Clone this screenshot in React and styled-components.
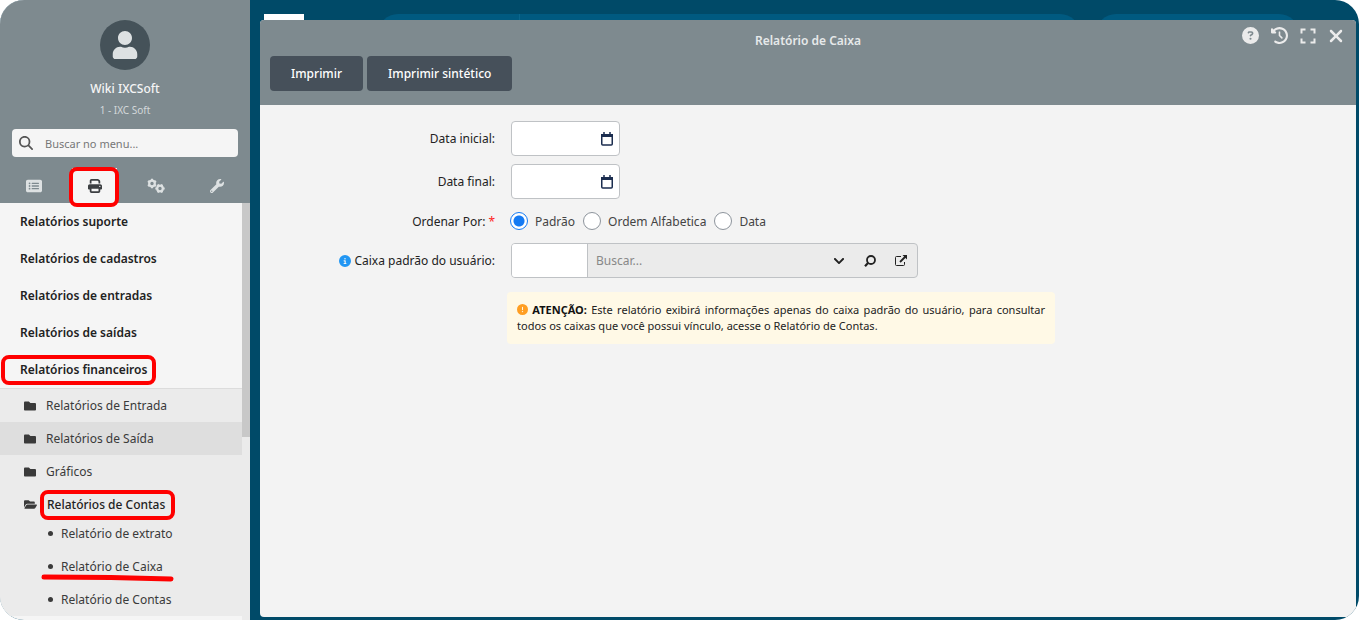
import React from 'react';
import styled, { createGlobalStyle } from 'styled-components';
import { FaUser, FaWrench, FaFolder, FaFolderOpen, FaChevronDown } from 'react-icons/fa';
import { FaCircleQuestion, FaClockRotateLeft, FaRectangleList, FaXmark, FaCircleInfo, FaCircleExclamation, FaMagnifyingGlass, FaPrint } from 'react-icons/fa6';

const groups = ['Relatórios suporte', 'Relatórios de cadastros', 'Relatórios de entradas', 'Relatórios de saídas'];
const reports = ['Relatório de extrato', 'Relatório de Caixa', 'Relatório de Contas'];
const orders = ['Padrão', 'Ordem Alfabetica', 'Data'];

const Calendar = () => (
    <svg width="14" height="14" viewBox="0 0 14 14" fill="none" stroke="#1b2d4f">
        <path d="M1.75 3h10.5v9a1 1 0 0 1-1 1h-8.5a1 1 0 0 1-1-1z" strokeWidth="1.5" />
        <path d="M1 3.5h12" strokeWidth="3" />
        <path d="M4 0v3M10 0v3" strokeWidth="1.5" />
    </svg>
);

const Gears = () => (
    <svg width="18" height="16" viewBox="0 0 18 16" fill="none" stroke="currentColor">
        <circle cx="5" cy="5.500" r="2.800" strokeWidth="2.200" />
        <path d="M5 .8v9.400M.9 3.200l8.200 4.600M.9 7.800l8.200-4.600" strokeWidth="2" strokeDasharray="1.900 5.600 1.900 0" />
        <circle cx="13" cy="10.500" r="2.800" strokeWidth="2.200" />
        <path d="M8.300 10.500h9.400M10.700 6.400l4.600 8.200M15.300 6.400l-4.600 8.200" strokeWidth="2" strokeDasharray="1.900 5.600 1.900 0" />
    </svg>
);

const Expand = () => (
    <svg width="16" height="16" viewBox="0 0 16 16" fill="none" stroke="currentColor" strokeWidth="2">
        <path d="M1.500 5.500v-4h4M10.500 1.500h4v4M14.500 10.500v4h-4M5.500 14.500h-4v-4" />
    </svg>
);

const Loupe = () => (
    <svg width="14" height="14" viewBox="0 0 14 14" fill="none" stroke="currentColor">
        <circle cx="8" cy="6" r="4" strokeWidth="1.800" />
        <path d="M5 9l-3 3.200" strokeWidth="2.200" />
    </svg>
);

const External = () => (
    <svg width="14" height="14" viewBox="0 0 14 14" fill="none" stroke="currentColor">
        <path d="M7 2.500H2.500a1 1 0 0 0-1 1v7a1 1 0 0 0 1 1h7a1 1 0 0 0 1-1V8" strokeWidth="1" />
        <path d="M6 8L11.500 2.500" strokeWidth="1.800" />
        <path d="M8.500 1h4.500v4.500z" fill="currentColor" stroke="none" />
    </svg>
);

const App = () => {
    return (
        <Shell>
            <GlobalStyle />
            <Sidebar>
                <Profile>
                    <Avatar><FaUser size={28} /></Avatar>
                    <UserName>Wiki IXCSoft</UserName>
                    <Company>1 - IXC Soft</Company>
                    <MenuSearch>
                        <FaMagnifyingGlass size={14} />
                        <input type="text" placeholder="Buscar no menu..." aria-label="Buscar no menu" />
                    </MenuSearch>
                    <Tabs>
                        <Tab type="button" aria-label="Cadastros"><FaRectangleList size={16} /></Tab>
                        <Tab type="button" aria-label="Relatórios" $active><FaPrint size={14} /><TabMark /></Tab>
                        <Tab type="button" aria-label="Configurações"><Gears /></Tab>
                        <Tab type="button" aria-label="Ferramentas"><FaWrench size={14} /></Tab>
                    </Tabs>
                </Profile>
                <MenuArea>
                    <Menu>
                        {groups.map((name) => <Group href="#" key={name}>{name}</Group>)}
                        <Group href="#">Relatórios financeiros<GroupMark /></Group>
                        <Submenu>
                            <Folder href="#"><FaFolder size={12} />Relatórios de Entrada</Folder>
                            <Folder href="#" $hover><FaFolder size={12} />Relatórios de Saída</Folder>
                            <Folder href="#"><FaFolder size={12} />Gráficos</Folder>
                            <Folder href="#" $open><FaFolderOpen size={13} />Relatórios de Contas<FolderMark /></Folder>
                            {reports.map((name) => (
                                <Report href="#" key={name}>
                                    {name}
                                    {name === 'Relatório de Caixa' && (
                                        <Underline viewBox="0 0 134 8">
                                            <path d="M3 3L70 3.500L130 5" fill="none" stroke="#f00" strokeWidth="5" strokeLinecap="round" />
                                        </Underline>
                                    )}
                                </Report>
                            ))}
                        </Submenu>
                    </Menu>
                    <ScrollTrack><ScrollThumb /></ScrollTrack>
                </MenuArea>
            </Sidebar>
            <Main>
                <TopBar>
                    <Logo />
                    <GlobalSearch><span /></GlobalSearch>
                    <TopPill />
                </TopBar>
                <Window>
                    <WindowHeader>
                        <TitleBar>
                            <Title>Relatório de Caixa</Title>
                            <WindowActions>
                                <IconButton type="button" aria-label="Ajuda"><FaCircleQuestion size={17} /></IconButton>
                                <IconButton type="button" aria-label="Histórico"><FaClockRotateLeft size={17} /></IconButton>
                                <IconButton type="button" aria-label="Expandir"><Expand /></IconButton>
                                <IconButton type="button" aria-label="Fechar"><FaXmark size={20} /></IconButton>
                            </WindowActions>
                        </TitleBar>
                        <Toolbar>
                            <Button type="button">Imprimir</Button>
                            <Button type="button">Imprimir sintético</Button>
                        </Toolbar>
                    </WindowHeader>
                    <Form>
                        <Row>
                            <Label htmlFor="start">Data inicial:</Label>
                            <DateField><input id="start" type="text" /><Calendar /></DateField>
                        </Row>
                        <Row>
                            <Label htmlFor="end">Data final:</Label>
                            <DateField><input id="end" type="text" /><Calendar /></DateField>
                        </Row>
                        <Row $short>
                            <Label as="span" id="order">Ordenar Por: <Required>*</Required></Label>
                            <Options role="radiogroup" aria-labelledby="order">
                                {orders.map((name, i) => (
                                    <Option key={name}>
                                        <Radio type="radio" name="order" defaultChecked={i === 0} />
                                        {name}
                                    </Option>
                                ))}
                            </Options>
                        </Row>
                        <Row>
                            <Label htmlFor="cashier"><FaCircleInfo size={12} color="#2196f3" />Caixa padrão do usuário:</Label>
                            <Lookup>
                                <LookupCode id="cashier" type="text" />
                                <LookupText type="text" placeholder="Buscar..." aria-label="Buscar caixa" />
                                <LookupButton type="button" aria-label="Abrir lista"><FaChevronDown size={12} /></LookupButton>
                                <LookupButton type="button" aria-label="Pesquisar"><Loupe /></LookupButton>
                                <LookupButton type="button" aria-label="Abrir cadastro"><External /></LookupButton>
                            </Lookup>
                        </Row>
                        <Notice>
                            <FaCircleExclamation size={11} color="#ff9e22" />{' '}
                            <b>ATENÇÃO:</b> Este relatório exibirá informações apenas do caixa padrão do usuário, para consultar todos os caixas que você possui vínculo, acesse o Relatório de Contas.
                        </Notice>
                    </Form>
                </Window>
            </Main>
        </Shell>
    )
};

const GlobalStyle = createGlobalStyle`
* { box-sizing: border-box; }
body {
    margin: 0;
    background: #fff;
    font-family: "Noto Sans", "Open Sans", sans-serif;
    font-size: 12px;
    color: #222;
}
button, input { font: inherit; color: inherit; margin: 0; }
button { border: 0; padding: 0; cursor: pointer; }
a { color: inherit; text-decoration: none; }
`
const Shell = styled.div`
display:flex;
min-height:100vh;
border-radius:24px;
overflow:hidden;
background:#004a68;
`
const Sidebar = styled.aside`
width:250px;
flex:none;
display:flex;
flex-direction:column;
background:#f5f5f5;
`
const Profile = styled.div`
display:flex;
flex-direction:column;
align-items:center;
padding-top:20px;
background:#7e8a8f;
`
const Avatar = styled.div`
width:50px;
height:50px;
border-radius:50%;
display:flex;
align-items:center;
justify-content:center;
background:#455259;
color:#dde1e2;
`
const UserName = styled.div`
margin-top:9px;
line-height:20px;
font-weight:500;
color:#f5f5f5;
`
const Company = styled.div`
margin-top:3px;
line-height:16px;
font-size:10px;
color:#d3d8da;
`
const MenuSearch = styled.label`
align-self:stretch;
display:flex;
align-items:center;
gap:12px;
height:28px;
margin:11px 12px;
padding:0 7px;
border-radius:4px;
background:#f5f5f5;
color:#555;
svg { flex:none; }
input {
    flex:1;
    min-width:0;
    border:0;
    outline:0;
    padding:0;
    background:transparent;
    font-size:11px;
}
input::placeholder { color:#777; }
`
const Tabs = styled.nav`
align-self:stretch;
display:flex;
justify-content:space-between;
height:35px;
padding:0 11px;
`
const Tab = styled.button`
position:relative;
width:45px;
display:flex;
align-items:center;
justify-content:center;
background:${(p) => (p.$active ? '#f5f5f5' : 'transparent')};
color:${(p) => (p.$active ? '#3c3f42' : '#dde1e2')};
`
const Mark = styled.span`
position:absolute;
border:4px solid #f00;
border-radius:8px;
pointer-events:none;
`
const TabMark = styled(Mark)`
inset:-1px -2px -4px -3px;
`
const MenuArea = styled.div`
flex:1;
display:flex;
`
const Menu = styled.nav`
flex:1;
display:flex;
flex-direction:column;
`
const Group = styled.a`
position:relative;
height:37px;
padding-left:20px;
line-height:37px;
font-weight:600;
`
const GroupMark = styled(Mark)`
left:1px;
top:4px;
width:155px;
height:30px;
`
const Submenu = styled.div`
border-top:1px solid #dcdcdc;
background:#ebebeb;
color:#3a3a3a;
`
const Folder = styled.a`
position:relative;
display:flex;
align-items:center;
gap:10px;
height:${(p) => (p.$open ? '29px' : '33px')};
padding-left:24px;
padding-top:${(p) => (p.$open ? '4px' : '0')};
font-weight:${(p) => (p.$open ? 500 : 400)};
color:${(p) => (p.$open ? '#222' : '#3a3a3a')};
background:${(p) => (p.$hover ? '#dedede' : 'transparent')};
svg { color:#3a3a3a; }
`
const FolderMark = styled(Mark)`
left:40px;
top:2px;
width:135px;
height:30px;
`
const Report = styled.a`
position:relative;
display:flex;
align-items:center;
gap:8px;
height:33px;
padding-left:48px;
&::before {
    content:'';
    width:5px;
    height:5px;
    border-radius:50%;
    background:#3a3a3a;
}
`
const Underline = styled.svg`
position:absolute;
left:41px;
bottom:1px;
width:134px;
height:8px;
`
const ScrollTrack = styled.div`
width:8px;
background:#ebebeb;
`
const ScrollThumb = styled.div`
height:56%;
background:#c8c8c8;
`
const Main = styled.main`
flex:1;
min-width:0;
display:flex;
flex-direction:column;
padding:0 3px 3px 10px;
`
const TopBar = styled.div`
display:flex;
height:20px;
padding:14px 57px 0 4px;
overflow:hidden;
`
const Logo = styled.div`
width:40px;
height:40px;
flex:none;
background:#fff;
`
const GlobalSearch = styled.div`
flex:1;
height:40px;
margin-left:74px;
border-radius:20px;
background:#005a80;
span {
    display:block;
    width:142px;
    height:40px;
    border-right:1px solid #0a668c;
}
`
const TopPill = styled.div`
width:203px;
height:40px;
margin-left:16px;
border-radius:20px;
background:#005a80;
`
const Window = styled.section`
flex:1;
display:flex;
flex-direction:column;
border-radius:4px;
overflow:hidden;
background:#f3f3f3;
`
const WindowHeader = styled.header`
height:85px;
background:#7e8a8f;
`
const TitleBar = styled.div`
display:grid;
grid-template-columns:1fr auto 1fr;
height:36px;
padding:0 10px;
`
const Title = styled.h1`
grid-column:2;
margin:0;
padding-top:4px;
line-height:34px;
font-size:12px;
font-weight:600;
color:#e6e9ea;
`
const WindowActions = styled.div`
display:flex;
justify-content:flex-end;
align-items:center;
gap:12px;
height:31px;
`
const IconButton = styled.button`
display:flex;
background:transparent;
color:#ebebeb;
&:last-child { margin-left:-2px; }
`
const Toolbar = styled.div`
display:flex;
gap:4px;
padding:0 10px;
`
const Button = styled.button`
height:35px;
padding:0 21px;
border-radius:4px;
background:#46505a;
color:#fff;
font-weight:500;
`
const Form = styled.form`
display:flex;
flex-direction:column;
gap:8px;
padding:16px 0;
`
const Row = styled.div`
display:grid;
grid-template-columns:235px 1fr;
gap:16px;
align-items:center;
min-height:${(p) => (p.$short ? '28px' : '35px')};
`
const Label = styled.label`
display:flex;
justify-content:flex-end;
align-items:center;
gap:3px;
color:#222;
`
const Required = styled.span`
color:#f22;
`
const DateField = styled.div`
display:flex;
align-items:center;
width:109px;
height:35px;
padding:0 5px;
border:1px solid #bfc2c5;
border-radius:4px;
background:#fff;
input {
    flex:1;
    min-width:0;
    border:0;
    outline:0;
    background:transparent;
}
`
const Options = styled.div`
display:flex;
gap:8px;
margin-left:-1px;
`
const Option = styled.label`
display:flex;
align-items:center;
gap:7px;
color:#444;
`
const Radio = styled.input`
appearance:none;
width:18px;
height:18px;
border:1px solid #8d949c;
border-radius:50%;
background:#fff;
&:checked {
    border-color:#147af3;
    background:radial-gradient(circle, #147af3 5px, #fff 6px);
}
`
const Lookup = styled.div`
display:flex;
width:407px;
height:35px;
padding-right:1px;
border:1px solid #bfc2c5;
border-radius:4px;
overflow:hidden;
background:#ebebeb;
`
const LookupCode = styled.input`
width:76px;
border:0;
border-right:1px solid #bfc2c5;
outline:0;
background:#fff;
`
const LookupText = styled.input`
flex:1;
min-width:0;
padding:0 8px;
border:0;
outline:0;
background:transparent;
&::placeholder { color:#888; }
`
const LookupButton = styled.button`
display:flex;
align-items:center;
justify-content:center;
width:31px;
background:transparent;
color:#222;
`
const Notice = styled.p`
max-width:548px;
margin:6px 0 0 247px;
padding:10px;
border-radius:4px;
background:#fff9e6;
font-size:11px;
line-height:16px;
text-align:justify;
svg { vertical-align:-1px; }
b { color:#111; }
`

export default App;
